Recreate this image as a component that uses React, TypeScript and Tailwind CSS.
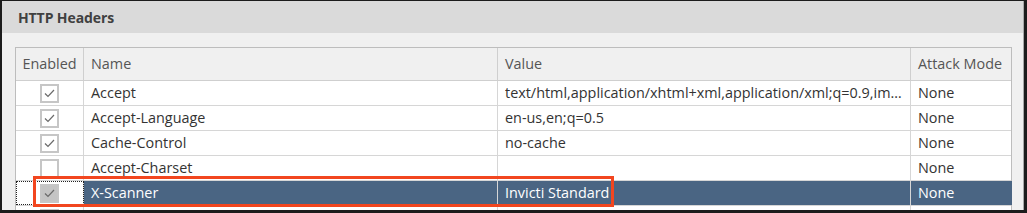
import React from 'react'

interface HeaderRow {
  enabled: boolean
  name: string
  value: string
  mode: string
  selected?: boolean
}

const ROWS: HeaderRow[] = [
  {
    enabled: true,
    name: 'Accept',
    value: 'text/html,application/xhtml+xml,application/xml;q=0.9,image/webp,*/*;q=0.8',
    mode: 'None',
  },
  { enabled: true, name: 'Accept-Language', value: 'en-us,en;q=0.5', mode: 'None' },
  { enabled: true, name: 'Cache-Control', value: 'no-cache', mode: 'None' },
  { enabled: false, name: 'Accept-Charset', value: '', mode: 'None' },
  { enabled: true, name: 'X-Scanner', value: 'Invicti Standard', mode: 'None', selected: true },
  { enabled: true, name: '', value: '', mode: '' },
]

const COLS = 'grid grid-cols-[68px_414px_413px_101px]'

function Checkbox({ checked, selected }: { checked: boolean; selected?: boolean }) {
  return (
    <div
      className={`w-[19px] h-[19px] border-2 border-[#c6c6c6] flex items-center justify-center ${
        selected ? 'bg-[#c4c4c4]' : 'bg-white'
      }`}
    >
      {checked && (
        <svg width="11" height="9" viewBox="0 0 11 9">
          <polyline points="1,4.5 4,7.5 10,1" fill="none" stroke="#6a6a6a" strokeWidth="1.2" />
        </svg>
      )}
    </div>
  )
}

export default function App() {
  return (
    <div
      className="w-[1027px] h-[213px] bg-[#1c1c1c] pt-px pl-[2px] overflow-hidden"
      style={{ fontFamily: '"Open Sans", "Noto Sans", sans-serif' }}
    >
      <div className="w-[1022px] h-[209px] bg-[#f0f0f0] border-r border-[#a8a8a8] relative overflow-hidden">
        <div className="h-[32px] bg-[#dadada] flex items-center pl-[16px]">
          <span className="text-[14px] font-bold text-[#404040] tracking-[-0.1px]">HTTP Headers</span>
        </div>

        <div className="ml-[13px] mt-[14px] w-[997px] border border-[#bdbdbd] border-b-0">
          <div className={`${COLS} h-[33px] text-[14.4px] text-[#555555] border-b border-[#cfcfcf]`}>
            <div className="flex items-center justify-center border-r border-[#cfcfcf]">Enabled</div>
            <div className="flex items-center pl-[7px] border-r border-[#cfcfcf]">Name</div>
            <div className="flex items-center pl-[7px] border-r border-[#cfcfcf]">Value</div>
            <div className="flex items-center pl-[7px]">Attack Mode</div>
          </div>

          {ROWS.map((r, i) => (
            <div
              key={i}
              className={`${COLS} h-[25px] text-[14.4px] border-b border-[#d6d6d6] ${
                r.selected ? 'text-white' : 'text-[#333333] bg-white'
              }`}
            >
              <div
                className={`flex items-center justify-center border-r border-[#d6d6d6] bg-white ${
                  r.selected ? 'outline outline-1 outline-dotted outline-[#222] -outline-offset-1' : ''
                }`}
              >
                <Checkbox checked={r.enabled} selected={r.selected} />
              </div>
              <div
                className={`flex items-center pl-[7px] border-r border-[#d6d6d6] ${
                  r.selected ? 'bg-[#4a6583]' : ''
                }`}
              >
                {r.name}
              </div>
              <div
                className={`flex items-center pl-[7px] pr-[8px] border-r border-[#d6d6d6] min-w-0 ${
                  r.selected ? 'bg-[#4a6583]' : ''
                }`}
              >
                <span className="truncate">{r.value}</span>
              </div>
              <div className={`flex items-center pl-[7px] ${r.selected ? 'bg-[#4a6583]' : ''}`}>{r.mode}</div>
            </div>
          ))}
        </div>

        <div className="absolute left-[31px] top-[175px] w-[581px] h-[31px] border-[3px] border-[#f2461f] pointer-events-none" />
      </div>
    </div>
  )
}
